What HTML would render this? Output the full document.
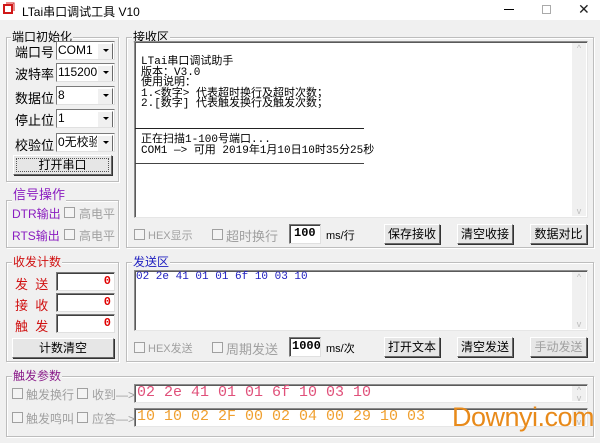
<!DOCTYPE html>
<html><head><meta charset="utf-8"><style>
*{box-sizing:border-box;margin:0;padding:0}
body{width:600px;height:443px;background:#f0f0f0;position:relative;overflow:hidden;font-family:"Liberation Sans","Noto Sans CJK SC",sans-serif;font-size:12px;color:#000}
.a{position:absolute;white-space:nowrap}
.tb{left:0;top:0;width:600px;height:20px;background:#fff}
.grp{position:absolute;border:1px solid #bdbdbd;box-shadow:inset 1px 1px 0 #fff,1px 1px 0 #fff}
.gl{position:absolute;background:#f0f0f0;padding:0 1px;font-size:12px;line-height:13px}
.sel{position:absolute;height:19px;background:#fff;border:1px solid #7a7a7a;border-right-color:#e0e0e0;border-bottom-color:#e0e0e0;font-family:"Liberation Sans","Noto Sans CJK SC",sans-serif;font-size:12px;line-height:17px;padding-left:1px;overflow:hidden}
.sel:after{content:"";position:absolute;right:1px;top:1px;width:14px;height:15px;background:#f0f0f0;border:1px solid #fff;border-right-color:#696969;border-bottom-color:#696969}
.sel i{position:absolute;right:5px;top:7px;border:3px solid transparent;border-top:3px solid #000;z-index:2}
.btn{position:absolute;height:20px;background:#e6e6e6;border:1px solid #fff;border-right-color:#696969;border-bottom-color:#696969;box-shadow:1px 1px 0 #333;text-align:center;font-size:12px;line-height:18px}
.ta{position:absolute;background:#fff;border:1px solid #8c8c8c;border-right-color:#e6e6e6;border-bottom-color:#e6e6e6;box-shadow:inset 1px 1px 0 #5a5a5a}
.sb{position:absolute;right:1px;top:1px;bottom:1px;width:14px;background:#f0f0f0;color:#bbb;font-size:9px;text-align:center}
.cb{position:absolute;width:11px;height:11px;border:1px solid #a0a0a0;background:#f4f4f4}
.gray{color:#a0a0a0}
.inp{position:absolute;background:#fff;border:1px solid #7a7a7a;border-right-color:#e0e0e0;border-bottom-color:#e0e0e0;box-shadow:inset 1px 1px 0 #404040;font-family:"Liberation Mono",monospace;font-weight:bold;font-size:12px;text-align:right;color:#e00000;padding-right:3px;line-height:17px}
.mono{font-family:"Liberation Mono","Noto Sans CJK SC",monospace}
.red{color:#d01010}
.lb{font-size:13px}
</style></head><body>
<div class="a tb"></div>
<svg class="a" style="left:3px;top:2px" width="12" height="12"><rect x="1" y="3" width="8" height="8" fill="none" stroke="#d01818" stroke-width="2"/><path d="M3 1h8v8" fill="none" stroke="#d01818" stroke-width="1"/></svg>
<div class="a" style="left:22px;top:3px;font-size:12px">LTai串口调试工具 V10</div>
<div class="a" style="left:504px;top:9px;width:10px;height:1px;background:#000"></div>
<div class="a" style="left:542px;top:5px;width:9px;height:9px;border:1px solid #aaa"></div>
<div class="a" style="left:578px;top:1px;font-size:14px;color:#222">✕</div>

<div class="grp" style="left:6px;top:37px;width:113px;height:145px"></div>
<div class="gl" style="left:11px;top:31px">端口初始化</div>
<div class="a lb" style="left:15px;top:42px">端口号</div>
<div class="sel" style="left:56px;top:41px;width:59px">COM1<i></i></div>
<div class="a lb" style="left:15px;top:64px">波特率</div>
<div class="sel" style="left:56px;top:63px;width:59px">115200<i></i></div>
<div class="a lb" style="left:15px;top:88px">数据位</div>
<div class="sel" style="left:56px;top:86px;width:59px">8<i></i></div>
<div class="a lb" style="left:15px;top:110px">停止位</div>
<div class="sel" style="left:56px;top:109px;width:59px">1<i></i></div>
<div class="a lb" style="left:15px;top:135px">校验位</div>
<div class="sel" style="left:56px;top:133px;width:59px">0无校验<i></i></div>
<div class="btn" style="left:13px;top:155px;width:99px;outline:1px dotted #555;outline-offset:-4px">打开串口</div>

<div class="grp" style="left:6px;top:200px;width:113px;height:48px"></div>
<div class="gl" style="left:12px;top:187px;color:#8a1cc0;font-size:13px;line-height:15px">信号操作</div>
<div class="a" style="left:12px;top:205px;color:#8a1cc0;font-size:12px">DTR输出</div>
<div class="cb" style="left:64px;top:207px"></div>
<div class="a gray" style="left:79px;top:205px">高电平</div>
<div class="a" style="left:12px;top:227px;color:#8a1cc0;font-size:12px">RTS输出</div>
<div class="cb" style="left:64px;top:229px"></div>
<div class="a gray" style="left:79px;top:227px">高电平</div>

<div class="grp" style="left:126px;top:37px;width:468px;height:211px"></div>
<div class="gl" style="left:132px;top:31px">接收区</div>
<div class="ta" style="left:134px;top:41px;width:454px;height:177px"><div class="sb">^<br><div style="position:absolute;bottom:0;width:14px">v</div></div></div>
<div class="a mono" style="left:141px;top:57px;font-size:11px;line-height:10.5px">LTai串口调试助手<br>版本：V3.0<br>使用说明：<br>1.&lt;数字&gt; 代表超时换行及超时次数；<br>2.[数字] 代表触发换行及触发次数；</div>
<div class="a" style="left:135px;top:128px;width:229px;height:1px;background:#222"></div>
<div class="a mono" style="left:141px;top:135px;font-size:11px;line-height:10.5px">正在扫描1-100号端口...<br>COM1 —&gt; 可用 2019年1月10日10时35分25秒</div>
<div class="a" style="left:135px;top:163px;width:229px;height:1px;background:#444"></div>
<div class="cb" style="left:134px;top:229px"></div>
<div class="a gray" style="left:148px;top:227px;font-size:11px">HEX显示</div>
<div class="cb" style="left:212px;top:229px"></div>
<div class="a gray lb" style="left:226px;top:226px">超时换行</div>
<div class="inp" style="left:289px;top:224px;width:32px;height:20px;color:#000;text-align:left;padding-left:4px">100</div>
<div class="a" style="left:326px;top:227px;font-size:11px">ms/行</div>
<div class="btn" style="left:384px;top:224px;width:56px">保存接收</div>
<div class="btn" style="left:457px;top:224px;width:56px">清空收接</div>
<div class="btn" style="left:530px;top:224px;width:57px">数据对比</div>

<div class="grp" style="left:6px;top:262px;width:113px;height:100px"></div>
<div class="gl" style="left:12px;top:256px;color:#d01010">收发计数</div>
<div class="a red" style="left:15px;top:274px;font-size:13px">发&nbsp;&nbsp;送</div>
<div class="inp" style="left:56px;top:272px;width:59px;height:19px">0</div>
<div class="a red" style="left:15px;top:295px;font-size:13px">接&nbsp;&nbsp;收</div>
<div class="inp" style="left:56px;top:293px;width:59px;height:19px">0</div>
<div class="a red" style="left:15px;top:316px;font-size:13px">触&nbsp;&nbsp;发</div>
<div class="inp" style="left:56px;top:314px;width:59px;height:19px">0</div>
<div class="btn" style="left:12px;top:338px;width:102px">计数清空</div>

<div class="grp" style="left:126px;top:262px;width:468px;height:100px"></div>
<div class="gl" style="left:132px;top:256px;color:#2020c0">发送区</div>
<div class="ta" style="left:134px;top:270px;width:454px;height:61px"><div class="sb">^<br><div style="position:absolute;bottom:0;width:14px">v</div></div></div>
<div class="a mono" style="left:136px;top:271px;font-size:11px;color:#2020c0">02 2e 41 01 01 6f 10 03 10</div>
<div class="cb" style="left:134px;top:342px"></div>
<div class="a gray" style="left:148px;top:340px;font-size:11px">HEX发送</div>
<div class="cb" style="left:212px;top:342px"></div>
<div class="a gray lb" style="left:226px;top:339px">周期发送</div>
<div class="inp" style="left:289px;top:337px;width:32px;height:20px;color:#000;text-align:left;padding-left:2px">1000</div>
<div class="a" style="left:326px;top:340px;font-size:11px">ms/次</div>
<div class="btn" style="left:384px;top:337px;width:56px">打开文本</div>
<div class="btn" style="left:457px;top:337px;width:56px">清空发送</div>
<div class="btn gray" style="left:530px;top:337px;width:57px">手动发送</div>

<div class="grp" style="left:6px;top:376px;width:588px;height:61px"></div>
<div class="gl" style="left:12px;top:370px;color:#8a1c8a">触发参数</div>
<div class="cb" style="left:12px;top:388px"></div>
<div class="a gray" style="left:26px;top:386px">触发换行</div>
<div class="cb" style="left:77px;top:388px"></div>
<div class="a gray" style="left:92px;top:386px">收到—&gt;</div>
<div class="ta" style="left:134px;top:384px;width:454px;height:19px"><div class="sb" style="line-height:8px">^<br>v</div></div>
<div class="a mono" style="left:137px;top:384px;font-size:15px;color:#e0507a">02 2e 41 01 01 6f 10 03 10</div>
<div class="cb" style="left:12px;top:412px"></div>
<div class="a gray" style="left:26px;top:410px">触发鸣叫</div>
<div class="cb" style="left:77px;top:412px"></div>
<div class="a gray" style="left:92px;top:410px">应答—&gt;</div>
<div class="ta" style="left:134px;top:408px;width:454px;height:19px"><div class="sb" style="line-height:8px">^<br>v</div></div>
<div class="a mono" style="left:137px;top:408px;font-size:15px;color:#f0a030">10 10 02 2F 00 02 04 00 29 10 03</div>
<div class="a" style="left:452px;top:402px;font-size:27px;color:#e88a1a;letter-spacing:-0.5px">Downyi.com</div>
</body></html>
